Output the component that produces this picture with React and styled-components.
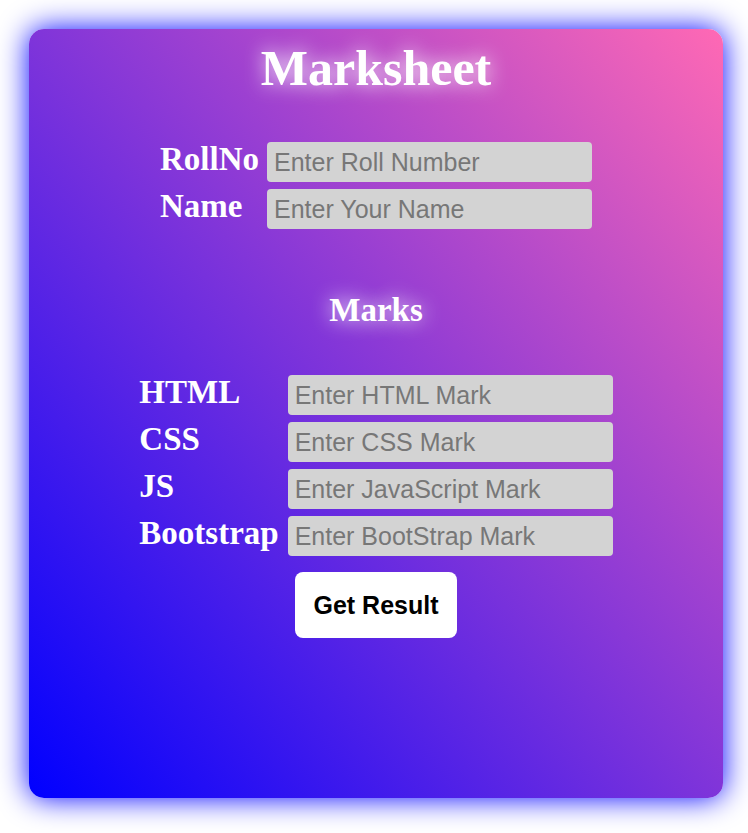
import styled, { createGlobalStyle } from 'styled-components';

const Global = createGlobalStyle`
body {
  margin: 0;
  background: #fff;
}
`;

const Page = styled.div`
padding: 29px 25px 35px 29px;
`;

const Card = styled.div`
width: 694px;
height: 769px;
box-sizing: border-box;
padding-top: 10px;
border-radius: 15px;
background: linear-gradient(to top right, #0000ff, #ff69b4);
box-shadow: 0 0 30px 0 #0000ff;
display: flex;
flex-direction: column;
align-items: center;
font-family: "Liberation Serif", "Times New Roman", serif;
color: #fff;
`;

const Title = styled.h1`
margin: 0;
font-size: 50px;
font-weight: bold;
text-shadow: 0 0 20px #fff;
`;

const Heading = styled.h2`
margin: 63px 0 0;
font-size: 33px;
font-weight: bold;
text-shadow: 0 0 20px #fff;
`;

const Grid = styled.div`
display: grid;
grid-template-columns: auto 325px;
column-gap: ${p => p.$gap}px;
row-gap: 7px;
align-items: center;
margin-top: ${p => p.$top}px;
`;

const Label = styled.label`
font-size: 33px;
font-weight: bold;
line-height: 34px;
padding-bottom: 6px;
`;

const Input = styled.input`
height: 40px;
box-sizing: border-box;
border: none;
border-radius: 4px;
padding: 0 7px;
background: #d3d3d3;
font-family: "Liberation Sans", Arial, sans-serif;
font-size: 25px;
outline: none;
&::placeholder {
  color: #777;
}
`;

const Button = styled.button`
margin-top: 16px;
padding: 0 18px;
height: 66px;
border: none;
border-radius: 8px;
background: #fff;
color: #000;
font-family: "Liberation Sans", Arial, sans-serif;
font-size: 25px;
font-weight: bold;
cursor: pointer;
`;

const App = () => {
  return (
    <Page>
      <Global />
      <Card>
        <Title>Marksheet</Title>
        <Grid $top={45} $gap={8}>
          <Label>RollNo</Label>
          <Input placeholder="Enter Roll Number" />
          <Label>Name</Label>
          <Input placeholder="Enter Your Name" />
        </Grid>
        <Heading>Marks</Heading>
        <Grid $top={46} $gap={9}>
          <Label>HTML</Label>
          <Input placeholder="Enter HTML Mark" />
          <Label>CSS</Label>
          <Input placeholder="Enter CSS Mark" />
          <Label>JS</Label>
          <Input placeholder="Enter JavaScript Mark" />
          <Label>Bootstrap</Label>
          <Input placeholder="Enter BootStrap Mark" />
        </Grid>
        <Button>Get Result</Button>
      </Card>
    </Page>
  );
};

export default App;
